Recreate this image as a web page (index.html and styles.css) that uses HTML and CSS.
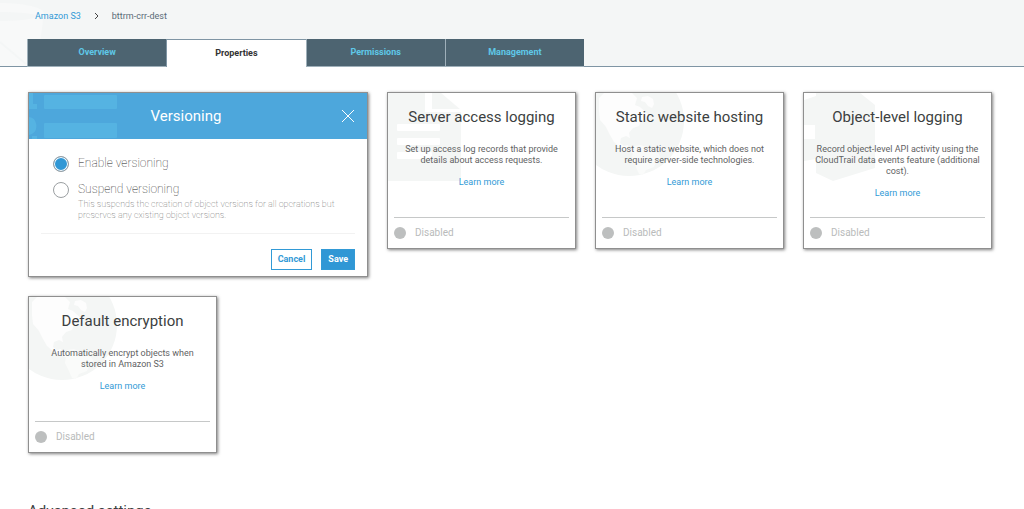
FILE: index.html
```html
<!DOCTYPE html>
<html lang="en">
<head>
  <meta charset="UTF-8">
  <meta name="viewport" content="width=device-width, initial-scale=1.0">
  <title>S3 Management Console</title>
  <link rel="stylesheet" href="styles.css">
</head>
<body>
  <!-- Shared shapes for the card backgrounds -->
  <svg class="symbols" aria-hidden="true">
    <symbol id="globe" viewBox="0 0 90 85">
      <circle cx="33" cy="28" r="55" fill="#f4f6f5"/>
      <path fill="#fdfdfd" d="M3 5l5-5h28l5 5-2 7 5 2 9 8-2 4-6 2-2 5-6 2-4 5 1 5-4-2-5 2-1 5 4 3 4-1 1 4 6 2-2 2-10-3-9-8-4-7-4-8-6-7-1-9z"/>
      <path fill="#fdfdfd" d="M46 4l6-1 5 3 1 5-2 4-4-2-3-4-4-1z"/>
      <path fill="#fafbfa" d="M38 53l7-1 10 4 8 5 2 5-5 3-2 5-8 3-3 5-4-1-4-9-3-6z"/>
    </symbol>
  </svg>

  <header class="page-header">
    <svg class="bucket" viewBox="0 0 46 66" aria-hidden="true">
      <path fill="#f8f9f9" d="M0 3c22 0 43 4 44 10l-7 53H0z"/>
      <path fill="#f4f6f6" d="M0 12c16 0 31 1 40 4-9 4-25 5-40 5z"/>
      <path fill="none" stroke="#f4f6f6" stroke-width="2" d="M0 42l26 22"/>
    </svg>
    <nav class="breadcrumb">
      <a href="#">Amazon S3</a>
      <svg class="chevron" viewBox="0 0 5 8" aria-hidden="true"><path d="M1 1l3 3-3 3"/></svg>
      <span>bttrm-crr-dest</span>
    </nav>
    <nav class="tabs">
      <a class="tab" href="#">Overview</a>
      <a class="tab active" href="#">Properties</a>
      <a class="tab" href="#">Permissions</a>
      <a class="tab" href="#">Management</a>
    </nav>
  </header>

  <main>
    <div class="cards">
      <form class="card versioning">
        <div class="versioning-head">
          <svg class="list-art" viewBox="0 0 90 46" aria-hidden="true">
            <path d="M0 0h4v11h4v5H0zM0 24a8 9 0 0 1 3 17l-3 1zM3 43h5v3H3z"/>
            <rect x="15" y="2" width="73" height="14" rx="1"/>
            <rect x="15" y="30" width="73" height="15" rx="1"/>
          </svg>
          <h2>Versioning</h2>
          <button type="button" class="close" aria-label="Close">
            <svg viewBox="0 0 14 14"><path d="M1 1l12 12M13 1L1 13"/></svg>
          </button>
        </div>
        <div class="versioning-body">
          <div class="option">
            <input type="radio" name="versioning" id="enable" checked>
            <label for="enable">Enable versioning</label>
          </div>
          <div class="option">
            <input type="radio" name="versioning" id="suspend">
            <div>
              <label for="suspend">Suspend versioning</label>
              <p>This suspends the creation of object versions for all operations but preserves any existing object versions.</p>
            </div>
          </div>
        </div>
        <div class="actions">
          <button type="button" class="btn">Cancel</button>
          <button type="button" class="btn primary">Save</button>
        </div>
      </form>

      <section class="card">
        <svg class="art" viewBox="0 0 90 90" aria-hidden="true">
          <path fill="#f4f6f5" d="M0 0h53l20 17v71H0z"/>
          <path fill="#fff" d="M37 0h7v16h29l2 1v2H37z"/>
          <rect x="9" y="31" width="43" height="7" rx="1" fill="#fff"/>
          <rect x="9" y="45" width="43" height="7" rx="1" fill="#fff"/>
          <rect x="9" y="59" width="35" height="7" rx="1" fill="#fff"/>
        </svg>
        <h2>Server access logging</h2>
        <p>Set up access log records that provide details about access requests.</p>
        <a href="#">Learn more</a>
        <div class="status">Disabled</div>
      </section>

      <section class="card">
        <svg class="art" viewBox="0 0 90 85" aria-hidden="true"><use href="#globe"/></svg>
        <h2>Static website hosting</h2>
        <p>Host a static website, which does not require server-side technologies.</p>
        <a href="#">Learn more</a>
        <div class="status">Disabled</div>
      </section>

      <section class="card">
        <svg class="art" viewBox="0 0 90 90" aria-hidden="true">
          <path fill="#f4f6f5" d="M12 0h44l15 12v63L29 88l-17-8V66L0 68V46h11V32H0V4z"/>
          <path fill="#fff" d="M0 0h12v3L0 7z"/>
        </svg>
        <h2>Object-level logging</h2>
        <p>Record object-level API activity using the CloudTrail data events feature (additional cost).</p>
        <a href="#">Learn more</a>
        <div class="status">Disabled</div>
      </section>

      <section class="card">
        <svg class="art" viewBox="0 0 90 85" aria-hidden="true"><use href="#globe"/></svg>
        <h2>Default encryption</h2>
        <p>Automatically encrypt objects when stored in Amazon S3</p>
        <a href="#">Learn more</a>
        <div class="status">Disabled</div>
      </section>
    </div>

    <h2 class="section-title">Advanced settings</h2>
  </main>
</body>
</html>
```

FILE: styles.css
```css
* { box-sizing: border-box; }

body {
  margin: 0;
  background: #fff;
  color: #3c3f41;
  font-family: Roboto, "Liberation Sans", sans-serif;
  font-size: 9px;
  line-height: 12px;
}

h2, p { margin: 0; }
h2 { font-weight: 400; }

a {
  color: #329ad6;
  text-decoration: none;
}

svg { display: block; }

.symbols {
  position: absolute;
  width: 0;
  height: 0;
}

/* Header */
.page-header {
  position: relative;
  padding: 10px 28px 0;
  background: #f4f6f6;
  border-bottom: 1px solid #7f95a4;
}

.bucket {
  position: absolute;
  left: 0;
  top: 0;
  width: 46px;
  height: 66px;
}

.breadcrumb {
  position: relative;
  display: flex;
  align-items: center;
  gap: 13px;
  padding-left: 7px;
  color: #5a6b77;
}

.chevron { width: 5px; height: 8px; }

.chevron path {
  fill: none;
  stroke: #444;
}

.tabs {
  position: relative;
  display: grid;
  grid-template-columns: repeat(4, 1fr);
  max-width: 557px;
  margin: 17px 0 -1px -1px;
}

.tab {
  padding: 7px 0 8px;
  background: #4d6471;
  border: 1px solid #9fb0ba;
  border-width: 0 0 1px 1px;
  color: #5fc8e8;
  font-weight: 700;
  text-align: center;
}

.tab.active {
  background: #fff;
  border-color: #7f95a4;
  border-width: 1px 0 0 1px;
  color: #333;
}

/* Cards */
main { padding: 25px 28px; }

.cards {
  display: flex;
  flex-wrap: wrap;
  align-items: flex-start;
  gap: 19px;
}

.card {
  position: relative;
  isolation: isolate;
  display: flex;
  flex-direction: column;
  align-items: center;
  width: 189px;
  min-height: 157px;
  padding: 14px 6px 9px;
  background: #fff;
  border: 1px solid #8f8f8f;
  box-shadow: 1px 1px 3px rgba(0, 0, 0, 0.5);
  text-align: center;
}

.card h2 {
  font-size: 15px;
  line-height: 20px;
}

.card p {
  padding: 0 5px;
  margin: 17px 0 10px;
  color: #5f6263;
  line-height: 11px;
}

.art {
  position: absolute;
  left: 0;
  top: 0;
  z-index: -1;
  width: 90px;
}

.status {
  display: flex;
  align-items: center;
  gap: 9px;
  width: 100%;
  margin-top: auto;
  padding-top: 9px;
  border-top: 1px solid #c6c8c8;
  color: #b9bbbb;
  font-size: 10px;
}

.status::before {
  content: "";
  width: 12px;
  height: 12px;
  border-radius: 50%;
  background: #bdbfbf;
}

/* Versioning form */
.versioning {
  align-items: stretch;
  width: 340px;
  padding: 0;
  text-align: left;
}

.versioning-head {
  position: relative;
  isolation: isolate;
  padding: 13px 50px;
  background: #4da7dc;
  color: #fff;
  text-align: center;
}

.versioning-head h2 { padding-right: 24px; }

.list-art {
  position: absolute;
  left: 0;
  top: 0;
  z-index: -1;
  width: 90px;
  fill: #55b3e2;
}

.close {
  position: absolute;
  right: 12px;
  top: 16px;
  padding: 0;
  border: 0;
  background: none;
  cursor: pointer;
}

.close svg {
  width: 14px;
  height: 14px;
  stroke: #fff;
}

.versioning-body {
  display: flex;
  flex-direction: column;
  gap: 9px;
  margin: 0 12px;
  padding: 16px 12px 12px;
  border-bottom: 1px solid #f2f2f2;
}

.option {
  display: flex;
  align-items: flex-start;
  gap: 9px;
}

.option input {
  flex: none;
  appearance: none;
  width: 16px;
  height: 16px;
  margin: 1px 0 0;
  border: 1px solid #9b9fa2;
  border-radius: 50%;
}

.option input:checked {
  background: #3097d5;
  box-shadow: inset 0 0 0 1px #fff;
}

.option label {
  display: block;
  color: #222;
  font-size: 12px;
  font-weight: 100;
  line-height: 16px;
}

.option p {
  padding: 0;
  margin: 2px 0 0;
  color: #555;
  font-weight: 100;
}

.actions {
  display: flex;
  justify-content: flex-end;
  gap: 9px;
  padding: 15px 12px 6px;
}

.btn {
  padding: 4px 6px;
  background: #fff;
  border: 1px solid #329ad6;
  color: #329ad6;
  font: 700 9px/11px Roboto, "Liberation Sans", sans-serif;
  cursor: pointer;
}

.btn.primary {
  background: #3097d5;
  color: #fff;
}

.section-title {
  margin-top: 48px;
  font-size: 15px;
  line-height: 20px;
}
```
